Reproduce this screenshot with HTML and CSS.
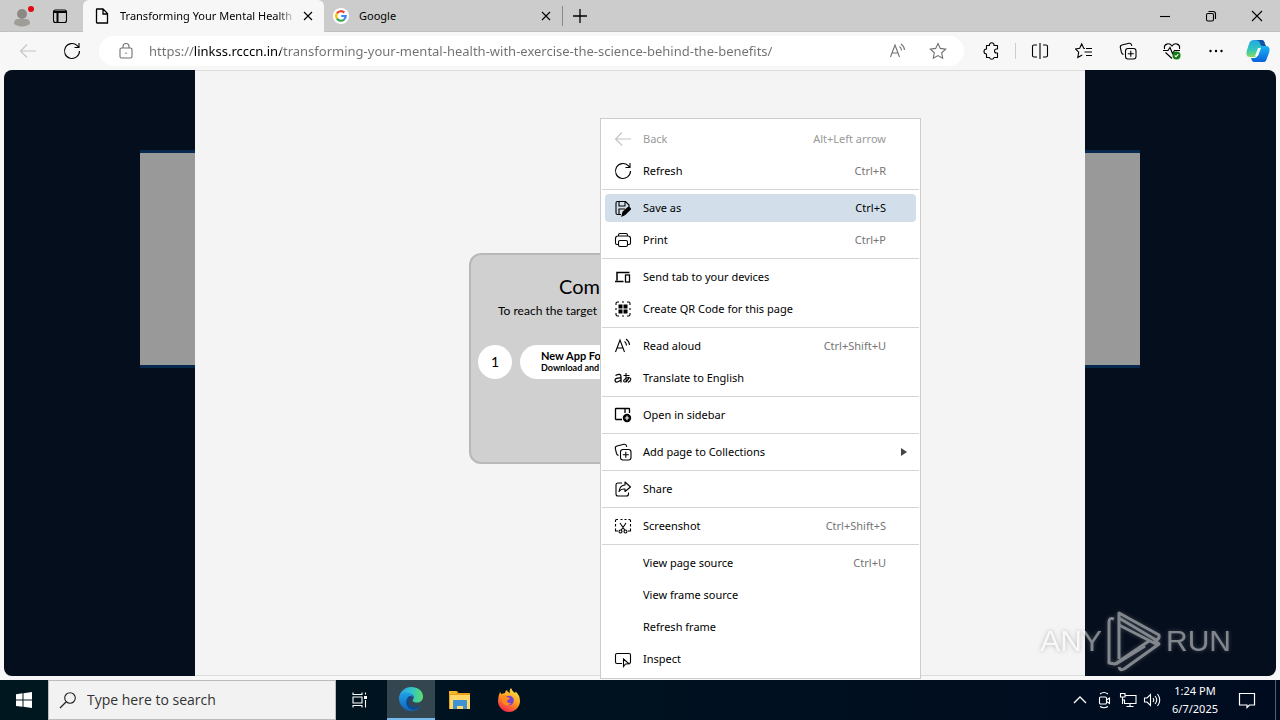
FILE: index.html
```html
<!DOCTYPE html>
<html lang="en">

    <head>
        <meta charset="UTF-8">
        <meta name="viewport" content="width=device-width, initial-scale=1.0">
        <title>Transforming Your Mental Health</title>
        <link rel="stylesheet" href="styles.css">
    </head>

    <body>
        <svg class="sprite" aria-hidden="true">
            <symbol id="back" viewBox="0 0 18 18"><path d="M17 9H1.5M8 2.5 1.5 9 8 15.500"/></symbol>
            <symbol id="refresh" viewBox="0 0 18 18"><path d="M16.500 9a7.500 7.500 0 1 1-2.300-5.400L16 5.500M16 1v4.500h-4.500"/></symbol>
            <symbol id="read" viewBox="0 0 18 18"><path d="m1.500 15 4.500-12 4.500 12M3 11h6M10.500 4.500q2 1.500 2 4M12 2q3.500 2.500 3.500 6"/></symbol>
            <symbol id="collections" viewBox="0 0 18 18"><rect x="6.500" y="6.500" width="10.500" height="10.500" rx="2.500"/><path d="M11.800 8.800v6M8.800 11.800h6M4.500 12.500Q3 12 2.500 10.500L1.300 5.500Q1 3.500 3 3l7-1.700q2-.4 2.500 1.500l.3 1"/></symbol>
            <symbol id="close" viewBox="0 0 12 12"><path d="m2 2 8 8M10 2 2 10"/></symbol>
        </svg>

        <header class="browser">
            <div class="tabs">
                <button class="tabs_profile" aria-label="Profile">
                    <svg viewBox="0 0 24 24" width="24" height="24"><circle cx="12" cy="10" r="5" fill="#8c8883"/><path d="M4 20q0-5 4-5h8q4 0 4 5-8 5-16 0" fill="#a09c98"/><circle cx="21" cy="5" r="3" fill="#e30613"/></svg>
                </button>
                <button class="tabs_actions" aria-label="Tab actions">
                    <svg class="icon" viewBox="0 0 16 16" width="16" height="16"><rect x="1.500" y="2" width="13" height="12.500" rx="2"/><path d="M1.500 4h13M5.500 4v10" stroke-width="2"/></svg>
                </button>
                <div class="tab tab_active">
                    <svg class="icon" viewBox="0 0 16 16" width="16" height="16"><path d="M3 1h6l4.500 4.500v9.500H3q-.5 0-.5-.5v-13q0-.5.500-.5M9 1v5h4.500" stroke-width="1.300"/></svg>
                    <button class="tab_title">Transforming Your Mental Health</button>
                    <button class="tab_close" aria-label="Close tab"><svg class="icon" width="12" height="12"><use href="#close"/></svg></button>
                </div>
                <div class="tab">
                    <svg viewBox="0 0 16 16" width="16" height="16"><circle cx="8" cy="8" r="8" fill="#fff"/><g fill="none" stroke-width="2.200"><path d="M4 5.400A4.700 4.700 0 0 1 11.300 4.600" stroke="#ea4335"/><path d="M4 5.400a4.700 4.700 0 0 0 0 5.200" stroke="#fbbc05"/><path d="M4 10.600a4.700 4.700 0 0 0 7 1" stroke="#34a853"/><path d="M11 11.600A4.700 4.700 0 0 0 12.700 8H8.200" stroke="#4285f4"/></g></svg>
                    <button class="tab_title">Google</button>
                    <button class="tab_close" aria-label="Close tab"><svg class="icon" width="12" height="12"><use href="#close"/></svg></button>
                </div>
                <button class="tabs_new" aria-label="New tab"><svg class="icon" viewBox="0 0 14 14" width="14" height="14"><path d="M7 0v14M0 7h14" stroke-width="1.300"/></svg></button>
                <div class="window">
                    <button aria-label="Minimize"><svg class="icon" viewBox="0 0 12 12" width="12" height="12"><path d="M1 6.500h10"/></svg></button>
                    <button aria-label="Restore"><svg class="icon" viewBox="0 0 12 12" width="12" height="12"><rect x="1.500" y="3.500" width="7" height="7.500" rx="1.500"/><path d="M3.500 1.500H8q2.500 0 2.500 2.500v5"/></svg></button>
                    <button aria-label="Close"><svg class="icon" viewBox="0 0 12 12" width="12" height="12"><path d="m1 1 10 10M11 1 1 11"/></svg></button>
                </div>
            </div>

            <div class="toolbar">
                <button class="toolbar_button is_disabled" aria-label="Back" disabled><svg class="icon" width="18" height="18"><use href="#back"/></svg></button>
                <button class="toolbar_button" aria-label="Refresh"><svg class="icon" width="18" height="18"><use href="#refresh"/></svg></button>
                <div class="address">
                    <svg class="icon" viewBox="0 0 16 18" width="16" height="18"><rect x="2" y="6" width="12" height="10" rx="1.500"/><path d="M5 6V4.500a3 3 0 0 1 6 0V6M8 10.500v1.500"/></svg>
                    <input class="address_input" type="text" aria-label="Address" value="https://linkss.rcccn.in/transforming-your-mental-health-with-exercise-the-science-behind-the-benefits/">
                    <button aria-label="Read aloud"><svg class="icon" width="18" height="18"><use href="#read"/></svg></button>
                    <button aria-label="Favorite"><svg class="icon" viewBox="0 0 18 18" width="18" height="18"><path d="m9 1.500 2.300 4.900 5.400.7-4 3.700 1 5.400L9 13.600l-4.700 2.600 1-5.400-4-3.700 5.400-.7z"/></svg></button>
                </div>
                <button class="toolbar_button" aria-label="Extensions"><svg class="icon" viewBox="0 0 18 18" width="18" height="18"><path d="M4.500 3.500h3a2.300 2.300 0 1 1 4.500 0h3.500V7h-1a2 2 0 0 0 0 4h1v4.500H12a2.300 2.300 0 0 1-4.500 0h-3V12a2.500 2.500 0 1 1 0-5z" stroke-linejoin="round"/></svg></button>
                <span class="toolbar_divider"></span>
                <button class="toolbar_button" aria-label="Split screen"><svg class="icon" viewBox="0 0 18 18" width="18" height="18"><path d="M6 3H3Q1.500 3 1.500 4.500v9Q1.500 15 3 15h3M12 3h3q1.500 0 1.500 1.500v9q0 1.500-1.500 1.500h-3M9 1v16"/></svg></button>
                <button class="toolbar_button" aria-label="Favorites"><svg class="icon" viewBox="0 0 18 18" width="18" height="18"><path d="m10 6.500-1.300-.2-2-4.500-2 4.500-4.200.6 3.200 3.200-.9 5.400 4.400-2.500M11 6.500h6M9.500 10H17M11 13.500h6"/></svg></button>
                <button class="toolbar_button" aria-label="Collections"><svg class="icon" width="18" height="18"><use href="#collections"/></svg></button>
                <button class="toolbar_button" aria-label="Browser essentials"><svg class="icon" viewBox="0 0 18 18" width="18" height="18"><path d="M1.500 7C.5 2 6 0 9 4c3-4 8.500-2 7.500 3M0 8.500h5l2-3 2.500 6 2-3H17M2.500 10.500 9 16.500"/><circle cx="13.500" cy="13.500" r="4" fill="#107c10" stroke="none"/><path d="m11.700 13.500 1.300 1.300 2.300-2.600" stroke="#fff"/></svg></button>
                <button class="toolbar_button" aria-label="Settings and more"><svg viewBox="0 0 18 18" width="18" height="18"><circle cx="3.500" cy="9" r="1.200"/><circle cx="9" cy="9" r="1.200"/><circle cx="14.500" cy="9" r="1.200"/></svg></button>
                <button class="toolbar_copilot" aria-label="Copilot">
                    <svg viewBox="0 0 24 24" width="24" height="24">
                        <defs>
                            <linearGradient id="cop1" x2="0" y2="1"><stop stop-color="#20a7e8"/><stop offset=".6" stop-color="#35c8b5"/><stop offset="1" stop-color="#8bd95c"/></linearGradient>
                            <linearGradient id="cop2" x2="0" y2="1"><stop stop-color="#18b4f2"/><stop offset="1" stop-color="#0b62db"/></linearGradient>
                        </defs>
                        <path d="M8 1h8q2 0 3 4l1 3h-4q-2 0-3 3l-2 5q-1 2-3 2H4q-5 0-3-7l2-6q1-4 5-4" fill="url(#cop1)"/>
                        <path d="M16 23H8q-2 0-3-4h4q2 0 3-3l2-6q1-3 3-3h3q5 0 3 7l-2 5q-1 4-3 4" fill="url(#cop2)"/>
                        <path d="M9 1h7q2 0 3 4l1 2h-4q-2-1-2-3-1-3-5-3" fill="#1452a4"/>
                        <path d="m12 9-3 8h3l3-8z" fill="#eefaff"/>
                    </svg>
                </button>
            </div>
        </header>

        <main class="page">
            <div class="banner"></div>
            <div class="modal">
                <section class="steps">
                    <h1 class="steps_heading">Com</h1>
                    <p class="steps_text">To reach the target</p>
                    <div class="step">
                        <span class="step_number">1</span>
                        <div class="step_body">
                            <strong class="step_title">New App Fo</strong>
                            <span class="step_note">Download and</span>
                        </div>
                    </div>
                </section>
            </div>
        </main>

        <nav class="menu" aria-label="Context menu">
            <button class="menu_item is_disabled" disabled><svg class="icon" width="18" height="18"><use href="#back"/></svg><span>Back</span><kbd>Alt+Left arrow</kbd></button>
            <button class="menu_item"><svg class="icon" width="18" height="18"><use href="#refresh"/></svg><span>Refresh</span><kbd>Ctrl+R</kbd></button>
            <hr>
            <button class="menu_item is_selected"><svg class="icon" viewBox="0 0 18 18" width="18" height="18"><path d="M7 15.500H3.500q-1.500 0-1.500-1.500V4q0-1.500 1.500-1.500h8L15 6v2M5 3v4h6V3M5 15v-5h6"/><path d="m8 17 1-4 5-4.500q2-.5 2.500 1.500L11 15.500z" fill="#000"/></svg><span>Save as</span><kbd>Ctrl+S</kbd></button>
            <button class="menu_item"><svg class="icon" viewBox="0 0 18 18" width="18" height="18"><path d="M4.500 13.500H3q-1.500 0-1.500-1.500V7.500Q1.500 5 4 5h10q2.500 0 2.500 2.500V12q0 1.500-1.500 1.500h-1.500M4.500 5V4q0-1.500 1.500-1.500h6q1.500 0 1.500 1.500v1"/><rect x="4.500" y="9.500" width="9" height="6" rx="1.500"/></svg><span>Print</span><kbd>Ctrl+P</kbd></button>
            <hr>
            <button class="menu_item"><svg class="icon" viewBox="0 0 18 18" width="18" height="18"><path d="M3 12.500v-8h12.500M1 13.500h8.500" stroke-width="1.500"/><rect x="11.500" y="7" width="4" height="7" stroke-width="1.300"/></svg><span>Send tab to your devices</span></button>
            <button class="menu_item"><svg class="icon" viewBox="0 0 18 18" width="18" height="18"><path d="M2 5V3.500Q2 2 3.500 2H5M13 2h1.500Q16 2 16 3.500V5M16 13v1.500q0 1.500-1.500 1.500H13M5 16H3.500Q2 16 2 14.500V13M8 2h2M8 16h2M2 8v2M16 8v2"/><path d="M4.500 4.500h4v4h-4zM9.500 4.500h4v4h-4zM4.500 9.500h4v4h-4zM9.500 9.500h4v4h-4z" fill="#000" stroke="none"/></svg><span>Create QR Code for this page</span></button>
            <hr>
            <button class="menu_item"><svg class="icon" width="18" height="18"><use href="#read"/></svg><span>Read aloud</span><kbd>Ctrl+Shift+U</kbd></button>
            <button class="menu_item"><svg class="icon" viewBox="0 0 18 18" width="18" height="18"><path d="M1.500 6.500Q7 3.500 7 8v5.500M7 9Q1 8.500 1 11.500q.5 3.500 6-.5" stroke-width="1.300"/><path d="M9.500 6.500h6M12 4v6q0 2 1 3M15 8q-1 4-4 5-2 0-1-2 2-3 5-2.500 3 1 1 3.500l-2 1.500"/></svg><span>Translate to English</span></button>
            <hr>
            <button class="menu_item"><svg class="icon" viewBox="0 0 18 18" width="18" height="18"><path d="M8 13.500H2q-.5 0-.5-.5V3q0-.5.500-.5h13q.5 0 .5.500v4M11 2.500V7" stroke-width="1.300"/><circle cx="13" cy="12" r="4.200" fill="#000" stroke="none"/><path d="M13 9.800v4.400M10.800 12h4.400" stroke="#fff"/></svg><span>Open in sidebar</span></button>
            <hr>
            <button class="menu_item"><svg class="icon" width="18" height="18"><use href="#collections"/></svg><span>Add page to Collections</span><svg class="menu_arrow" viewBox="0 0 6 8" width="6" height="8"><path d="m0 0 6 4-6 4z"/></svg></button>
            <hr>
            <button class="menu_item"><svg class="icon" viewBox="0 0 18 18" width="18" height="18"><path d="M8 3H4Q2 3 2 5v9q0 2 2 2h8.500q2 0 2-2v-1.500M11 2l5.500 5-5.500 4.500V9Q7 8.500 5 11.500 6 5 11 5z" stroke-linejoin="round"/></svg><span>Share</span></button>
            <hr>
            <button class="menu_item"><svg class="icon" viewBox="0 0 18 18" width="18" height="18"><path d="M1.500 5V3.500q0-1 1-1H4M6.500 2.500h2M10.500 2.500h2M14.500 2.500h1q1 0 1 1V5M1.500 7v2.500M16.500 7v2.500M1.500 11.500V14H4M16.500 11.500V14H14M6 6l4.700 7M12 6l-4.700 7"/><circle cx="6.500" cy="14.500" r="1.500"/><circle cx="11.500" cy="14.500" r="1.500"/></svg><span>Screenshot</span><kbd>Ctrl+Shift+S</kbd></button>
            <hr>
            <button class="menu_item menu_item_plain"><span>View page source</span><kbd>Ctrl+U</kbd></button>
            <button class="menu_item menu_item_plain"><span>View frame source</span></button>
            <button class="menu_item menu_item_plain"><span>Refresh frame</span></button>
            <button class="menu_item"><svg class="icon" viewBox="0 0 18 18" width="18" height="18"><path d="M8 13.500H3Q1.500 13.500 1.500 12V5Q1.500 3.500 3 3.500h12q1.500 0 1.500 1.500v7q0 1-1 1.500M9.500 9v7.500L11.500 14l3.500-.2z"/></svg><span>Inspect</span></button>
        </nav>

        <div class="watermark">
            <span>ANY</span>
            <svg viewBox="0 0 56 62" width="56" height="62"><g fill="none" stroke="currentColor" stroke-width="3" stroke-linejoin="round"><path d="M8 9Q3 7 3 12v41l6 1 34-23"/><path d="M13 49V3l40 22q1 4-3 5L13 8"/><path d="m13 15 37 19v-3M39 36 10 54M13 57q1 4 5 2l35-25-5-4"/></g></svg>
            <span>RUN</span>
        </div>

        <footer class="taskbar">
            <button class="taskbar_button" aria-label="Start"><svg viewBox="0 0 16 16" width="16" height="16" fill="#fff"><path d="M0 2.200 6.500 1.300v6.300H0zM7.500 1.200 16 0v7.600H7.500zM0 8.500h6.500v6.300L0 13.900zM7.500 8.500H16V16l-8.500-1.200z"/></svg></button>
            <div class="search">
                <svg class="icon" viewBox="0 0 18 18" width="18" height="18"><circle cx="11" cy="7" r="5.300"/><path d="m7 11-6 6" stroke-width="1.300"/></svg>
                <input class="search_input" type="text" aria-label="Search" placeholder="Type here to search">
            </div>
            <button class="taskbar_button" aria-label="Task view"><svg class="icon" viewBox="0 0 18 18" width="18" height="18"><path d="M2 1.500v2h9v-2M2 16.500v-2h9v2M2 6h9v6H2zM14.500 1.500v2M14.500 9v7.500"/><path d="M13 5h3v3h-3z" fill="#fff" stroke="none"/></svg></button>
            <div class="apps">
                <button class="taskbar_button is_running" aria-label="Edge">
                    <svg viewBox="0 0 24 24" width="24" height="24">
                        <defs>
                            <linearGradient id="edge1"><stop stop-color="#2a9be8"/><stop offset=".5" stop-color="#2fc2cf"/><stop offset="1" stop-color="#5be06a"/></linearGradient>
                            <linearGradient id="edge2" x2="0" y2="1"><stop stop-color="#1da1e6"/><stop offset="1" stop-color="#1262b8"/></linearGradient>
                        </defs>
                        <path d="M0 11C1 4 6 0 12 0c7 0 12 4 12 9.500 0 4-3 6-6 6-4 0-5-2-4-3 3-4-3-7-7-5.500Q2 8 0 11" fill="url(#edge1)"/>
                        <path d="M0 12c0-5 5-7 9-6 4 .5 5 3 5 4-5-1-7 5-3 9 3 3 7 3 11-.5C18 25 10 25.500 5 21.500 2 19 0 16 0 12" fill="url(#edge2)"/>
                        <path d="M9 10c-4 5-1 12 5 13 4-.5 6-2 8-4.500-6 3-13 0-12-5 .3-2 2-3 4-3-1-2-3-2-5-.5" fill="#114a8b"/>
                    </svg>
                </button>
                <button class="taskbar_button" aria-label="File Explorer">
                    <svg viewBox="0 0 22 20" width="22" height="20"><path d="M0 1h8l1.500 2H21v16H0z" fill="#e8a317"/><path d="M1 5h20v14H1z" fill="#ffd867"/><path d="M0 1h7v3H0z" fill="#f6b62d"/><path d="M4 19v-8q0-1 1-1h12q1 0 1 1v8h-4v-3H8v3z" fill="#3f93d2"/></svg>
                </button>
                <button class="taskbar_button" aria-label="Firefox">
                    <svg viewBox="0 0 24 24" width="24" height="24">
                        <defs><linearGradient id="fire" x1=".8" y1="0" x2=".3" y2="1"><stop stop-color="#ffe84a"/><stop offset=".5" stop-color="#ff9a1f"/><stop offset="1" stop-color="#f5234e"/></linearGradient></defs>
                        <path d="M3 4q1 1 1 2l4-1Q8 3 10 2q0 2 3 3Q12 2 14 0q1 3 4 5 1-1 0-2 5 4 5 10c0 6-5 11-11 11S1 19 1 13q0-5 2-9" fill="url(#fire)"/>
                        <circle cx="12" cy="12.500" r="4.800" fill="#7542d6"/>
                        <path d="M5 8q3-2 5 1l3 1q-1 2-3 2.500 0 3 4 2.500-2 3-6 2-4-3-3-9" fill="#ff8a1c"/>
                    </svg>
                </button>
            </div>
            <div class="tray">
                <svg class="icon" viewBox="0 0 18 18" width="18" height="18"><path d="m3 12 6-6 6 6" stroke-width="1.300"/></svg>
                <svg class="icon" viewBox="0 0 18 18" width="18" height="18"><rect x="4.500" y="6" width="7" height="7" rx="1"/><path d="m11.500 9 3-2v5.500l-3-2M5 3q4-3 8 0M5 15.500q4 2.500 8 0"/></svg>
                <svg class="icon" viewBox="0 0 18 18" width="18" height="18"><path d="M6 4.500h11v8H5.500v-4M11 12.500v3M7.500 15.500h7M1.500 2.500H6V6H1.500zM3.500 6v7M3.500 9H6"/></svg>
                <svg class="icon" viewBox="0 0 18 18" width="18" height="18"><path d="M1.500 7H4l3.500-3.500v11L4 11H1.500zM10 7q1.500 2 0 4M12 5q3.500 4 0 8M14.500 3q4.500 6 0 12"/></svg>
                <time class="clock"><span>1:24 PM</span><span>6/7/2025</span></time>
                <button class="notifications" aria-label="Notifications"><svg class="icon" viewBox="0 0 18 18" width="18" height="18"><path d="M1.500 2.500h15v11.500h-5L9 16.500V14H1.500z" stroke-width="1.200"/></svg></button>
            </div>
            <button class="show_desktop" aria-label="Show desktop"></button>
        </footer>
    </body>

</html>
```
FILE: styles.css
```css
*,
*::after,
*::before {
    box-sizing: border-box;
    margin: 0;
    padding: 0;
}

body {
    position: relative;
    display: flex;
    flex-direction: column;
    height: 100vh;
    overflow: hidden;
    font-family: "Noto Sans", "Open Sans", sans-serif;
    font-size: 11px;
    line-height: 16px;
    color: #000;
    background-color: #f7f7f7;
}

button,
input {
    font: inherit;
    color: inherit;
    background: none;
    border: 0;
    outline: 0;
}

button {
    display: flex;
    flex-shrink: 0;
    align-items: center;
    justify-content: center;
}

svg {
    flex-shrink: 0;
}

.sprite {
    position: absolute;
    width: 0;
    height: 0;
}

.icon {
    fill: none;
    stroke: currentColor;
    stroke-width: 1.1;
}

/* tab strip */
.tabs {
    display: flex;
    height: 32px;
    background-color: #ccc;
    border-bottom: 1px solid #c0c0c0;
}

.tabs_profile {
    width: 44px;
}

.tabs_actions {
    width: 32px;
    margin-right: 7px;
}

.tab {
    display: flex;
    align-items: center;
    gap: 10px;
    width: 238px;
    padding: 0 8px 0 9px;
}

.tab_active {
    width: 241px;
    height: 32px;
    padding-left: 11px;
    background-color: #f7f7f7;
    border-radius: 6px 6px 0 0;
}

.tab_title {
    flex: 1;
    min-width: 0;
    overflow: hidden;
    justify-content: flex-start;
    white-space: nowrap;
}

.tab_active .tab_title {
    margin-right: -6px;
    mask-image: linear-gradient(to left, transparent, #000 18px);
}

.tab_close {
    width: 16px;
    height: 16px;
}

.tabs_new {
    width: 34px;
    height: 20px;
    margin-top: 6px;
    border-left: 1px solid #888;
}

.window {
    display: flex;
    margin-left: auto;
}

.window button {
    width: 46px;
}

/* toolbar */
.toolbar {
    display: flex;
    align-items: center;
    height: 38px;
    padding: 0 2px 0 6px;
}

.toolbar_button {
    width: 44px;
    height: 32px;
}

.toolbar_copilot {
    width: 40px;
}

.toolbar_divider {
    width: 1px;
    height: 16px;
    margin: 0 2px;
    background-color: #ccc;
}

.is_disabled {
    color: #999;
}

.is_disabled .icon {
    color: #c4c4c4;
}

.address {
    display: flex;
    flex: 1;
    align-items: center;
    height: 30px;
    margin: 0 5px;
    padding: 0 6px 0 19px;
    color: #707070;
    background-color: #fff;
    border-radius: 15px;
}

.address_input {
    flex: 1;
    min-width: 0;
    margin-left: 15px;
    font-size: 13px;
    line-height: 20px;
    /* the host part is darker than the rest of the address */
    background-image: linear-gradient(to right, #707070 45px, #000 45px, #000 132px, #707070 132px);
    background-clip: text;
    -webkit-text-fill-color: transparent;
}

.address button {
    width: 40px;
}

/* page */
.page {
    display: flex;
    flex: 1;
    justify-content: center;
    position: relative;
    margin: 0 4px 4px;
    overflow: hidden;
    background-color: #050e1d;
    border-radius: 8px;
}

.banner {
    width: 1000px;
    height: 218px;
    margin-top: 80px;
    background-color: #999;
    border: solid #06294d;
    border-width: 3px 0;
}

.modal {
    position: absolute;
    top: 0;
    bottom: 0;
    width: 890px;
    display: flex;
    flex-direction: column;
    align-items: center;
    padding-top: 182px;
    background-color: #f4f4f4;
    border: solid #ddd;
    border-width: 1px 0;
}

.steps {
    width: 342px;
    height: 211px;
    padding: 18px 7px;
    font-family: Lato, sans-serif;
    background-color: #d0d0d0;
    border: 2px solid #b8b8b8;
    border-radius: 12px;
}

.steps_heading {
    padding-left: 81px;
    font-size: 20px;
    font-weight: 400;
    line-height: 26px;
}

.steps_text {
    padding-left: 20px;
    font-size: 12px;
    line-height: 24px;
}

.step {
    display: flex;
    gap: 8px;
    margin-top: 22px;
}

.step_number {
    width: 34px;
    font-size: 14px;
    line-height: 34px;
    text-align: center;
    background-color: #fff;
    border-radius: 50%;
}

.step_body {
    display: flex;
    flex: 1;
    flex-direction: column;
    justify-content: center;
    padding-left: 21px;
    background-color: #fff;
    border-radius: 17px;
}

.step_title {
    font-size: 11px;
    line-height: 12px;
}

.step_note {
    font-size: 9px;
    font-weight: 700;
    line-height: 12px;
}

/* context menu */
.menu {
    position: absolute;
    top: 118px;
    left: 600px;
    display: flex;
    flex-direction: column;
    width: 321px;
    padding: 4px 1px 3px;
    background-color: #fff;
    border: 1px solid #ccc;
}

.menu_item {
    justify-content: flex-start;
    gap: 11px;
    height: 28px;
    margin: 2px 3px;
    padding: 0 30px 0 9px;
    border-radius: 4px;
}

.menu_item_plain {
    padding-left: 38px;
}

.menu_item kbd {
    margin-left: auto;
    font: inherit;
    color: #757575;
}

.menu_item.is_disabled kbd {
    color: #999;
}

.menu_item.is_selected {
    background-color: #d2dfea;
}

.menu_item.is_selected kbd {
    color: #000;
}

.menu_arrow {
    margin-left: auto;
    margin-right: -21px;
    fill: #444;
}

.menu hr {
    height: 1px;
    margin: 2px 0;
    background-color: #d4d4d4;
    border: 0;
}

.watermark {
    position: absolute;
    right: 49px;
    bottom: 48px;
    display: flex;
    align-items: center;
    gap: 4px;
    font-family: "Liberation Sans Narrow", "Liberation Sans", sans-serif;
    font-size: 30px;
    line-height: 62px;
    color: #fff;
    opacity: 0.5;
    filter: drop-shadow(0 0 2px #777);
}

/* taskbar */
.taskbar {
    display: flex;
    height: 40px;
    color: #fff;
    background-image: linear-gradient(to right, #001720, #000b20);
}

.taskbar_button {
    width: 48px;
    height: 40px;
}

.search {
    display: flex;
    align-items: center;
    width: 288px;
    padding: 0 10px;
    color: #222;
    background-color: #f2f2f2;
    border: 1px solid #bbb;
}

.search_input {
    flex: 1;
    min-width: 0;
    margin-left: 10px;
    font-family: "Open Sans", sans-serif;
    font-size: 14px;
    line-height: 20px;
}

.search_input::placeholder {
    color: #333;
}

.apps {
    display: flex;
    gap: 1px;
    margin-left: 3px;
}

.is_running {
    background-color: #344750;
    border-bottom: 2px solid #76b9ed;
}

.tray {
    display: flex;
    align-items: center;
    gap: 6px;
    margin-left: auto;
}

.clock {
    display: flex;
    flex-direction: column;
    width: 56px;
    line-height: 18px;
    text-align: center;
}

.notifications {
    width: 36px;
    height: 40px;
}

.show_desktop {
    width: 5px;
    margin-left: 10px;
    border-left: 1px solid #53606b;
}
```
